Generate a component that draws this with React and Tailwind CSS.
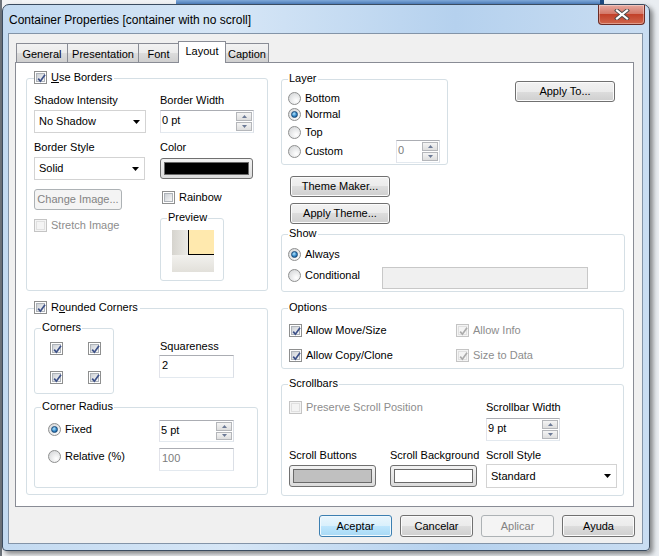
import React from 'react';

const Check = ({ checked, disabled, children, className = '' }) => (
  <div className={`flex items-center gap-[4px] ${className}`}>
    <span
      className={`relative flex h-[13px] w-[13px] shrink-0 items-center justify-center border ${
        disabled ? 'border-[#c4c4c4] bg-[#f4f4f4]' : 'border-[#8e8f8f] bg-white'
      }`}
    >
      <span
        className={`h-[9px] w-[9px] border ${
          disabled
            ? 'border-[#e0e0e0] bg-[#f4f4f4]'
            : 'border-[#aeb3b9] bg-[linear-gradient(135deg,#cdd1d6,#f7f7f7)]'
        }`}
      />
      {checked && (
        <svg className="absolute left-[1px] top-[1px]" width="11" height="11" viewBox="0 0 11 11">
          <path
            d="M2.2 5.6 L4.4 8.2 L9 1.8"
            fill="none"
            stroke={disabled ? '#ababab' : '#3d5188'}
            strokeWidth="1.7"
          />
        </svg>
      )}
    </span>
    {children && <span className={disabled ? 'text-[#8d8d8d]' : ''}>{children}</span>}
  </div>
);

const Radio = ({ checked, children, className = '' }) => (
  <div className={`flex items-center gap-[4px] ${className}`}>
    <span className="flex h-[13px] w-[13px] shrink-0 items-center justify-center rounded-full border border-[#8e8f8f] bg-[radial-gradient(circle_at_65%_70%,#ffffff,#cfd1d3)]">
      {checked && (
        <span className="h-[7px] w-[7px] rounded-full border border-[#1b4a78] bg-[radial-gradient(circle_at_40%_35%,#b8e6fc,#2f86c8_55%,#0f3d6e)]" />
      )}
    </span>
    <span>{children}</span>
  </div>
);

const Dropdown = ({ value, className = '' }) => (
  <div className={`flex items-center justify-between border border-[#d3d3d3] bg-white pl-[4px] pr-[5px] ${className}`}>
    <span>{value}</span>
    <svg width="7" height="4" viewBox="0 0 7 4">
      <path d="M0 0h7L3.5 4z" fill="#000" />
    </svg>
  </div>
);

const SpinBtn = ({ down }) => (
  <span className="flex flex-1 items-center justify-center border border-[#b4b6ba] bg-[linear-gradient(#f4f4f4,#dedede)]">
    <svg width="5" height="3" viewBox="0 0 5 3">
      <path d={down ? 'M0 0h5L2.5 3z' : 'M0 3h5L2.5 0z'} fill="#6c7a96" />
    </svg>
  </span>
);

const Spin = ({ value, disabled, className = '' }) => (
  <div
    className={`flex border border-t-[#abadb3] border-r-[#dbdfe6] border-b-[#e3e9ef] border-l-[#e2e3ea] bg-white ${className}`}
  >
    <span className={`flex-1 pl-[1px] pt-[3px] ${disabled ? 'text-[#7c7c7c]' : ''}`}>{value}</span>
    <span className="flex w-[17px] flex-col gap-[1px] py-[1px] pr-[1px]">
      <SpinBtn />
      <SpinBtn down />
    </span>
  </div>
);

const Field = ({ value, disabled, className = '' }) => (
  <div
    className={`border border-t-[#abadb3] border-r-[#dbdfe6] border-b-[#e3e9ef] border-l-[#e2e3ea] bg-white pl-[2px] pt-[3px] ${
      disabled ? 'text-[#7c7c7c]' : ''
    } ${className}`}
  >
    {value}
  </div>
);

const Btn = ({ children, variant, className = '' }) => {
  const styles = {
    normal:
      'border-[#707070] bg-[linear-gradient(#f2f2f2,#ebebeb_50%,#dddddd_50%,#cfcfcf)] shadow-[inset_0_0_0_1px_#fbfbfb]',
    focus:
      'border-[#3c7fb1] bg-[linear-gradient(#eaf6fd,#d9f0fc_50%,#bee6fd_50%,#a7d9f5)] shadow-[inset_0_0_0_1px_#f0f9fe]',
    disabled: 'border-[#adb2b5] bg-[#f4f4f4] text-[#838383]',
  };
  return (
    <div
      className={`flex items-center justify-center rounded-[3px] border ${styles[variant || 'normal']} ${className}`}
    >
      {children}
    </div>
  );
};

const Swatch = ({ color, className = '' }) => (
  <div
    className={`rounded-[3px] border border-[#707070] bg-[linear-gradient(#f2f2f2,#dcdcdc)] p-[3px] ${className}`}
  >
    <div className={`h-full w-full border border-[#6a6a6a] ${color}`} />
  </div>
);

const Group = ({ title, header, className = '', children }) => (
  <div className={`relative rounded-[3px] border border-[#d5dfe5] ${className}`}>
    {title && (
      <div className="absolute left-[6px] top-[-8px] bg-white px-[1px] leading-[13px]">{title}</div>
    )}
    {header && <div className="absolute left-[7px] top-[-8px] bg-white pr-[2px] leading-[13px]">{header}</div>}
    {children}
  </div>
);

const Label = ({ children, className = '' }) => <div className={`h-[13px] leading-[13px] ${className}`}>{children}</div>;

const tabs = ['General', 'Presentation', 'Font', 'Layout', 'Caption'];
const tabWidths = { General: 'w-[52px]', Presentation: 'w-[72px]', Font: 'w-[41px]', Layout: 'w-[48px]', Caption: 'w-[44px]' };

function LayoutPage() {
  return (
    <div className="flex pl-[10px] pt-[15px]">
      {/* left column */}
      <div className="flex w-[242px] flex-col">
        <Group
          className="h-[213px]"
          header={
            <Check checked>
              <span>
                <span className="underline">U</span>se Borders
              </span>
            </Check>
          }
        >
          <div className="flex pl-[7px] pt-[15px]">
            <div className="flex w-[126px] flex-col">
              <Label>Shadow Intensity</Label>
              <Dropdown value="No Shadow" className="mt-[3px] h-[23px] w-[112px]" />
              <Label className="mt-[8px]">Border Style</Label>
              <Dropdown value="Solid" className="mt-[3px] h-[23px] w-[111px]" />
              <Btn variant="disabled" className="mt-[9px] h-[21px] w-[88px]">
                Change Image...
              </Btn>
              <Check disabled className="mt-[9px]">
                Stretch Image
              </Check>
            </div>
            <div className="flex flex-col">
              <Label>Border Width</Label>
              <Spin value="0 pt" className="mt-[3px] h-[23px] w-[94px]" />
              <Label className="mt-[8px]">Color</Label>
              <Swatch color="bg-black" className="mt-[4px] h-[21px] w-[93px]" />
              <Check className="ml-[2px] mt-[12px]">Rainbow</Check>
              <Group title="Preview" className="mt-[14px] h-[63px] w-[64px]">
                <div className="ml-[11px] mt-[11px] grid h-[42px] w-[42px] grid-cols-[16px_26px] grid-rows-[25px_17px] bg-[linear-gradient(90deg,#d6d4ce,#ecebe7_40%,#ffffff)]">
                  <div />
                  <div className="border-b border-l border-black bg-[#ffe9ae]" />
                  <div className="col-span-2 bg-[linear-gradient(#f2f1ee,#e2e0da)]" />
                </div>
              </Group>
            </div>
          </div>
        </Group>

        <Group
          className="mt-[17px] h-[187px]"
          header={
            <Check checked>
              <span>
                R<span className="underline">o</span>unded Corners
              </span>
            </Check>
          }
        >
          <div className="flex pl-[7px] pt-[19px]">
            <Group title="Corners" className="h-[66px] w-[80px]">
              <div className="grid grid-cols-[13px_13px] gap-x-[25px] gap-y-[16px] pl-[15px] pt-[13px]">
                <Check checked />
                <Check checked />
                <Check checked />
                <Check checked />
              </div>
            </Group>
            <div className="ml-[45px] flex flex-col pt-[12px]">
              <Label className="ml-[1px]">Squareness</Label>
              <Field value="2" className="mt-[2px] h-[23px] w-[75px]" />
            </div>
          </div>
          <div className="pl-[7px] pt-[13px]">
            <Group title="Corner Radius" className="h-[81px] w-[224px]">
              <div className="flex pl-[13px] pt-[12px]">
                <div className="flex w-[111px] flex-col pt-[3px]">
                  <Radio checked>Fixed</Radio>
                  <Radio className="mt-[14px]">Relative (%)</Radio>
                </div>
                <div className="flex flex-col">
                  <Spin value="5 pt" className="h-[22px] w-[75px]" />
                  <Field value="100" disabled className="mt-[6px] h-[23px] w-[75px]" />
                </div>
              </div>
            </Group>
          </div>
        </Group>
      </div>

      {/* right column */}
      <div className="ml-[13px] flex w-[344px] flex-col pt-[1px]">
        <div className="flex items-start">
          <Group title="Layer" className="h-[86px] w-[167px]">
            <div className="flex flex-col pl-[6px] pt-[10px]">
              <Radio className="h-[16px]">Bottom</Radio>
              <Radio checked className="h-[17px]">
                Normal
              </Radio>
              <Radio className="h-[19px]">Top</Radio>
              <div className="flex h-[18px] items-center justify-between pr-[7px]">
                <Radio>Custom</Radio>
                <Spin value="0" disabled className="h-[23px] w-[44px]" />
              </div>
            </div>
          </Group>
          <Btn className="ml-[67px] mt-[2px] h-[21px] w-[100px]">Apply To...</Btn>
        </div>
        <Btn className="ml-[9px] mt-[11px] h-[21px] w-[100px]">Theme Maker...</Btn>
        <Btn className="ml-[9px] mt-[6px] h-[21px] w-[100px]">Apply Theme...</Btn>

        <Group title="Show" className="mt-[10px] h-[58px] w-[344px]">
          <div className="flex flex-col pl-[6px] pt-[13px]">
            <Radio checked>Always</Radio>
            <div className="mt-[6px] flex items-start">
              <Radio className="mt-[2px] w-[94px]">Conditional</Radio>
              <div className="h-[22px] w-[206px] border border-[#c8c8c8] bg-[#f0f0f0]" />
            </div>
          </div>
        </Group>

        <Group title="Options" className="mt-[16px] h-[61px] w-[343px]">
          <div className="grid grid-cols-[167px_150px] gap-y-[12px] pl-[7px] pt-[15px]">
            <Check checked>Allow Move/Size</Check>
            <Check checked disabled>
              Allow Info
            </Check>
            <Check checked>Allow Copy/Clone</Check>
            <Check checked disabled>
              Size to Data
            </Check>
          </div>
        </Group>

        <Group title="Scrollbars" className="mt-[15px] h-[112px] w-[343px]">
          <div className="flex pl-[7px] pt-[16px]">
            <div className="flex w-[197px] flex-col">
              <Check disabled>Preserve Scroll Position</Check>
            </div>
            <div className="flex flex-col">
              <Label>Scrollbar Width</Label>
              <Spin value="9 pt" className="mt-[4px] h-[23px] w-[74px]" />
            </div>
          </div>
          <div className="mt-[8px] flex pl-[7px]">
            <div className="flex w-[101px] flex-col">
              <Label>Scroll Buttons</Label>
              <Swatch color="bg-[#c0c0c0]" className="mt-[3px] h-[22px] w-[87px]" />
            </div>
            <div className="flex w-[96px] flex-col">
              <Label>Scroll Background</Label>
              <Swatch color="bg-white" className="mt-[3px] h-[22px] w-[87px]" />
            </div>
            <div className="flex flex-col">
              <Label>Scroll Style</Label>
              <Dropdown value="Standard" className="mt-[2px] h-[24px] w-[131px]" />
            </div>
          </div>
        </Group>
      </div>
    </div>
  );
}

export default function App() {
  return (
    <div className="relative h-[556px] w-[659px] overflow-hidden bg-[linear-gradient(90deg,#6d737a_0px,#6d737a_2px,#f3f4f6_2px,#e9edf1)] font-['Liberation_Sans',sans-serif] text-[11px] leading-[13px] text-black">
      {/* another window's edge behind the dialog */}
      <div className="absolute left-[176px] top-0 h-[5px] w-[428px] border-r-[3px] border-b border-[#1d4a80] bg-[linear-gradient(#7fa8d8,#4f80bd)]" />
      <div className="absolute left-[600px] top-0 h-[17px] w-[3px] bg-[#1d4a80]" />
      <div className="relative ml-[2px] mt-[4px] flex h-[547px] w-[648px] flex-col rounded-t-[7px] rounded-b-[4px] border border-[#3b4c60] bg-[linear-gradient(90deg,#c3daf1,#d6e6f6_35%,#b5d1ee_70%,#c9ddf2)] shadow-[3px_3px_5px_rgba(0,0,0,0.45)]">
        {/* title bar */}
        <div className="flex h-[28px] items-start justify-between">
          <div className="pl-[6px] pt-[8px] text-[12px] leading-[14px]">Container Properties [container with no scroll]</div>
          <div className="mr-[4px] flex h-[20px] w-[47px] items-center justify-center rounded-b-[4px] border border-t-0 border-[#6b2b25] bg-[linear-gradient(#e6a99f,#d47a6a_45%,#c2412a_50%,#d0664c)] shadow-[inset_0_0_0_1px_rgba(255,255,255,0.35)]">
            <svg width="16" height="11" viewBox="0 0 16 11">
              <path d="M3 1.5 L13 9.5 M13 1.5 L3 9.5" stroke="#4a4a4a" strokeWidth="4" strokeLinecap="square" />
              <path d="M3 1.5 L13 9.5 M13 1.5 L3 9.5" stroke="#ffffff" strokeWidth="2.2" strokeLinecap="square" />
            </svg>
          </div>
        </div>

        {/* client area */}
        <div className="ml-[5px] flex h-[511px] w-[635px] flex-col border border-[#8394a8] bg-[#f0f0f0]">
          <div className="ml-[8px] mt-[8px] flex h-[20px] items-end">
            {tabs.map((t) =>
              t === 'Layout' ? (
                <div
                  key={t}
                  className={`relative z-10 -mb-px flex h-[22px] ${tabWidths[t]} -ml-px items-start justify-center border border-b-0 border-[#898c95] bg-white pt-[3px]`}
                >
                  {t}
                </div>
              ) : (
                <div
                  key={t}
                  className={`flex h-[19px] ${tabWidths[t]} -ml-px items-start justify-center border border-b-0 border-[#898c95] bg-[linear-gradient(#f2f2f2,#ebebeb_50%,#dddddd_50%,#cfcfcf)] pt-[4px]`}
                >
                  {t}
                </div>
              )
            )}
          </div>
          <div className="ml-[6px] h-[445px] w-[619px] border border-[#898c95] bg-white">
            <LayoutPage />
          </div>
          <div className="mr-[7px] mt-[8px] flex justify-end gap-[8px]">
            <Btn variant="focus" className="h-[22px] w-[73px]">
              Aceptar
            </Btn>
            <Btn className="h-[22px] w-[73px]">Cancelar</Btn>
            <Btn variant="disabled" className="h-[22px] w-[73px]">
              Aplicar
            </Btn>
            <Btn className="h-[22px] w-[73px]">Ayuda</Btn>
          </div>
        </div>
      </div>
    </div>
  );
}
